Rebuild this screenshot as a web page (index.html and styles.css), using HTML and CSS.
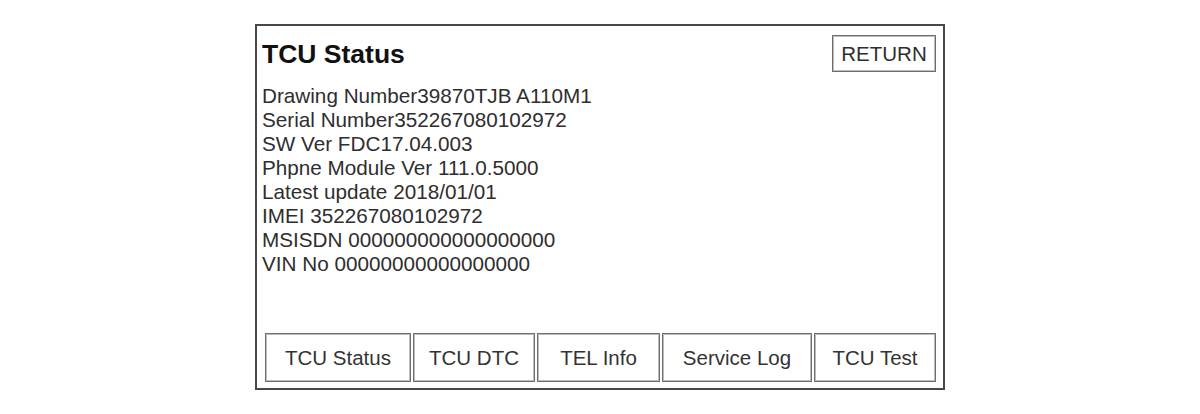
FILE: index.html
```html
<!DOCTYPE html>
<html lang="en">
<head>
    <meta charset="UTF-8">
    <meta name="viewport" content="width=device-width, initial-scale=1.0">
    <title>TCU Status</title>
    <link rel="stylesheet" href="styles.css">
</head>
<body>
    <!-- Ecran principal -->
    <div class="panel">
        <div class="panel-header">
            <h1 class="title">TCU Status</h1>
            <button class="btn-return">RETURN</button>
        </div>

        <!-- Informations TCU -->
        <div class="info">
            <p>Drawing Number39870TJB A110M1</p>
            <p>Serial Number352267080102972</p>
            <p>SW Ver FDC17.04.003</p>
            <p>Phpne Module Ver 111.0.5000</p>
            <p>Latest update 2018/01/01</p>
            <p>IMEI 352267080102972</p>
            <p>MSISDN 000000000000000000</p>
            <p>VIN No 00000000000000000</p>
        </div>

        <!-- Onglets -->
        <div class="tabs">
            <button class="tab tab-status">TCU Status</button>
            <button class="tab tab-dtc">TCU DTC</button>
            <button class="tab tab-tel">TEL Info</button>
            <button class="tab tab-log">Service Log</button>
            <button class="tab tab-test">TCU Test</button>
        </div>
    </div>
</body>
</html>
```

FILE: styles.css
```css
/* Page */
body {
    margin: 0;
    padding: 0;
    background-color: #ffffff;
    font-family: "Liberation Sans", Arial, sans-serif;
}

/* Cadre principal */
.panel {
    box-sizing: border-box;
    width: 690px;
    height: 366px;
    margin: 24px auto 0;
    padding: 9px 7px 6px 5px;
    border: 2px solid #484848;
    display: flex;
    flex-direction: column;
}

/* En-tete : titre + bouton retour */
.panel-header {
    display: flex;
    justify-content: space-between;
    align-items: flex-start;
}

.title {
    margin: 4px 0 0 0;
    font-size: 26.5px;
    line-height: 30px;
    font-weight: bold;
    color: #111111;
}

button {
    font-family: "Liberation Sans", Arial, sans-serif;
    background-color: #ffffff;
    padding: 0;
    cursor: pointer;
}

.btn-return {
    width: 104px;
    height: 37px;
    font-size: 20.5px;
    color: #2e2e2e;
    border: 1px solid #6e6e6e;
    box-shadow: inset 0 0 0 1px #bcbcbc;
}

/* Liste des infos */
.info {
    margin-top: 12px;
    color: #2e2e2e;
    font-size: 20.7px;
    line-height: 24px;
}

.info p {
    margin: 0;
}

/* Onglets du bas */
.tabs {
    margin-top: auto;
    margin-left: 3px;
    display: flex;
    gap: 2px;
}

.tab {
    height: 49px;
    font-size: 20.5px;
    color: #333333;
    border: 1px solid #6e6e6e;
    box-shadow: inset 0 0 0 1px #bcbcbc;
}

.tab-status { width: 146px; }
.tab-dtc { width: 122px; }
.tab-tel { width: 123px; }
.tab-log { width: 150px; }
.tab-test { width: 122px; }
```
